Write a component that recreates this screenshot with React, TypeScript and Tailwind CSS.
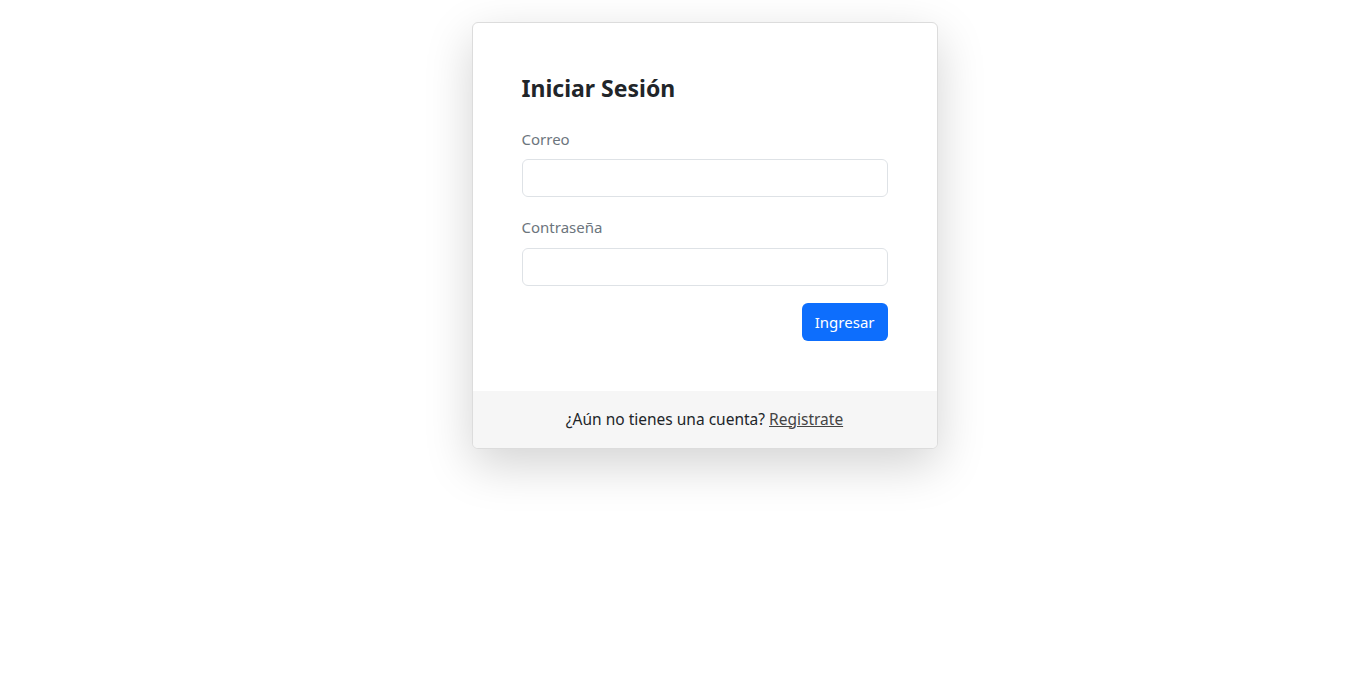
export default function App() {
  return (
    <div
      className="min-h-screen w-full bg-white"
      style={{ fontFamily: '"Noto Sans", "Open Sans", sans-serif' }}
    >
      <div className="flex justify-center pt-[22px] pl-[54px]">
        <div className="w-[466px] overflow-hidden rounded-[6px] border border-[#dcdcdc] bg-white shadow-[0_16px_48px_rgba(0,0,0,0.175)]">
          <div className="px-[49px] pt-[50px] pb-[50px]">
            <h1 className="mb-[24px] text-[23px] font-bold leading-[30px] text-[#212529]">
              Iniciar Sesión
            </h1>
            <label className="mb-[8px] block text-[15px] leading-[24px] text-[#6c757d]">
              Correo
            </label>
            <input
              type="email"
              className="block h-[38px] w-full rounded-[6px] border border-[#dee2e6] px-3 outline-none"
            />
            <label className="mt-[18px] mb-[9px] block text-[15px] leading-[24px] text-[#6c757d]">
              Contraseña
            </label>
            <input
              type="password"
              className="block h-[38px] w-full rounded-[6px] border border-[#dee2e6] px-3 outline-none"
            />
            <div className="mt-[17px] flex justify-end">
              <button className="h-[38px] rounded-[6px] bg-[#0d6efd] px-[13px] text-[15px] text-white">
                Ingresar
              </button>
            </div>
          </div>
          <div className="flex h-[57px] items-center justify-center bg-[#f6f6f6] text-[15.5px] text-[#212529]">
            <span>
              ¿Aún no tienes una cuenta?{" "}
              <a href="#" className="text-[#444] underline">
                Registrate
              </a>
            </span>
          </div>
        </div>
      </div>
    </div>
  );
}
